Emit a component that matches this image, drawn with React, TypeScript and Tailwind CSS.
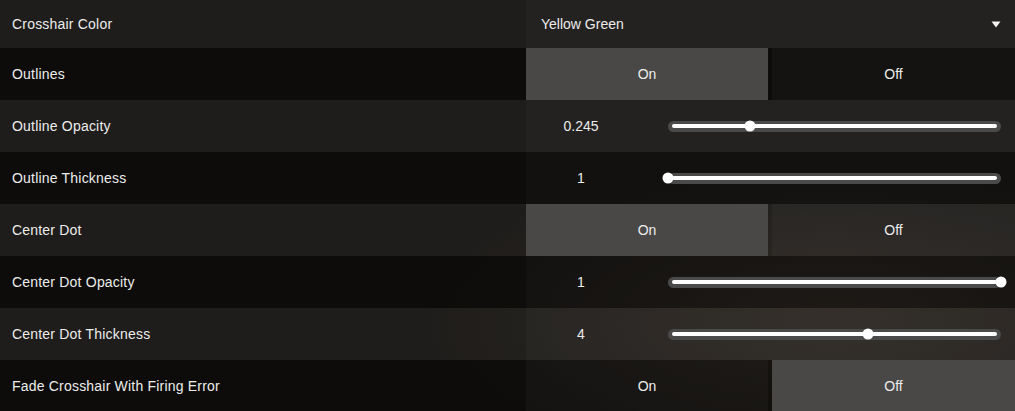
import React from "react";

const font = { fontFamily: '"Liberation Sans", Arial, sans-serif' };

type Row =
  | { label: string; kind: "dropdown"; value: string }
  | { label: string; kind: "toggle"; on: boolean }
  | { label: string; kind: "slider"; value: string; frac: number };

const rows: Row[] = [
  { label: "Crosshair Color", kind: "dropdown", value: "Yellow Green" },
  { label: "Outlines", kind: "toggle", on: true },
  { label: "Outline Opacity", kind: "slider", value: "0.245", frac: 0.245 },
  { label: "Outline Thickness", kind: "slider", value: "1", frac: 0 },
  { label: "Center Dot", kind: "toggle", on: true },
  { label: "Center Dot Opacity", kind: "slider", value: "1", frac: 1 },
  { label: "Center Dot Thickness", kind: "slider", value: "4", frac: 0.6 },
  { label: "Fade Crosshair With Firing Error", kind: "toggle", on: false },
];

function Slider({ frac }: { frac: number }) {
  return (
    <div className="relative ml-[32px] mr-[14px] h-[11px] flex-1 rounded-full bg-[#4a4a4a]">
      <div className="absolute left-[4px] right-[4px] top-[3.5px] h-[4px] rounded-full bg-white" />
      <div
        className="absolute top-1/2 h-[11px] w-[11px] -translate-x-1/2 -translate-y-1/2 rounded-full bg-white"
        style={{ left: `${frac * 100}%` }}
      />
    </div>
  );
}

function Control({ row }: { row: Row }) {
  if (row.kind === "dropdown") {
    return (
      <div className="flex h-full items-center bg-white/[0.025] pl-[15px] pr-[14px]">
        <span className="flex-1 text-[14px] text-[#ececec]">{row.value}</span>
        <svg width="10" height="7" viewBox="0 0 10 7">
          <path d="M0.5 0.5 H9.5 L5 6.5 Z" fill="#f2f2f2" />
        </svg>
      </div>
    );
  }
  if (row.kind === "toggle") {
    const active = "bg-[#4a4846]";
    const inactive = "bg-white/[0.03]";
    return (
      <div className="flex h-full gap-[4px]">
        <div className={`flex w-[242px] items-center justify-center text-[14px] text-[#ececec] ${row.on ? active : inactive}`}>
          On
        </div>
        <div className={`flex flex-1 items-center justify-center text-[14px] text-[#ececec] ${row.on ? inactive : active}`}>
          Off
        </div>
      </div>
    );
  }
  return (
    <div className="flex h-full items-center bg-white/[0.025]">
      <div className="w-[110px] text-center text-[14px] text-[#ececec]">{row.value}</div>
      <Slider frac={row.frac} />
    </div>
  );
}

export default function App() {
  return (
    <div
      className="h-[411px] w-[1015px] overflow-hidden bg-[#161412] bg-[radial-gradient(ellipse_at_82%_78%,rgba(110,90,70,0.22),transparent_35%)]"
      style={font}
    >
      <div className="flex flex-col">
        {rows.map((row, i) => (
          <div
            key={row.label}
            className={`flex ${i === 0 ? "h-[48px]" : "h-[52px]"} ${i % 2 === 0 ? "bg-white/[0.04]" : "bg-black/[0.4]"}`}
          >
            <div className="flex w-[526px] items-center pl-[12px] text-[14px] tracking-[0.2px] text-[#ececec]">
              {row.label}
            </div>
            <div className="flex-1">
              <Control row={row} />
            </div>
          </div>
        ))}
      </div>
    </div>
  );
}
